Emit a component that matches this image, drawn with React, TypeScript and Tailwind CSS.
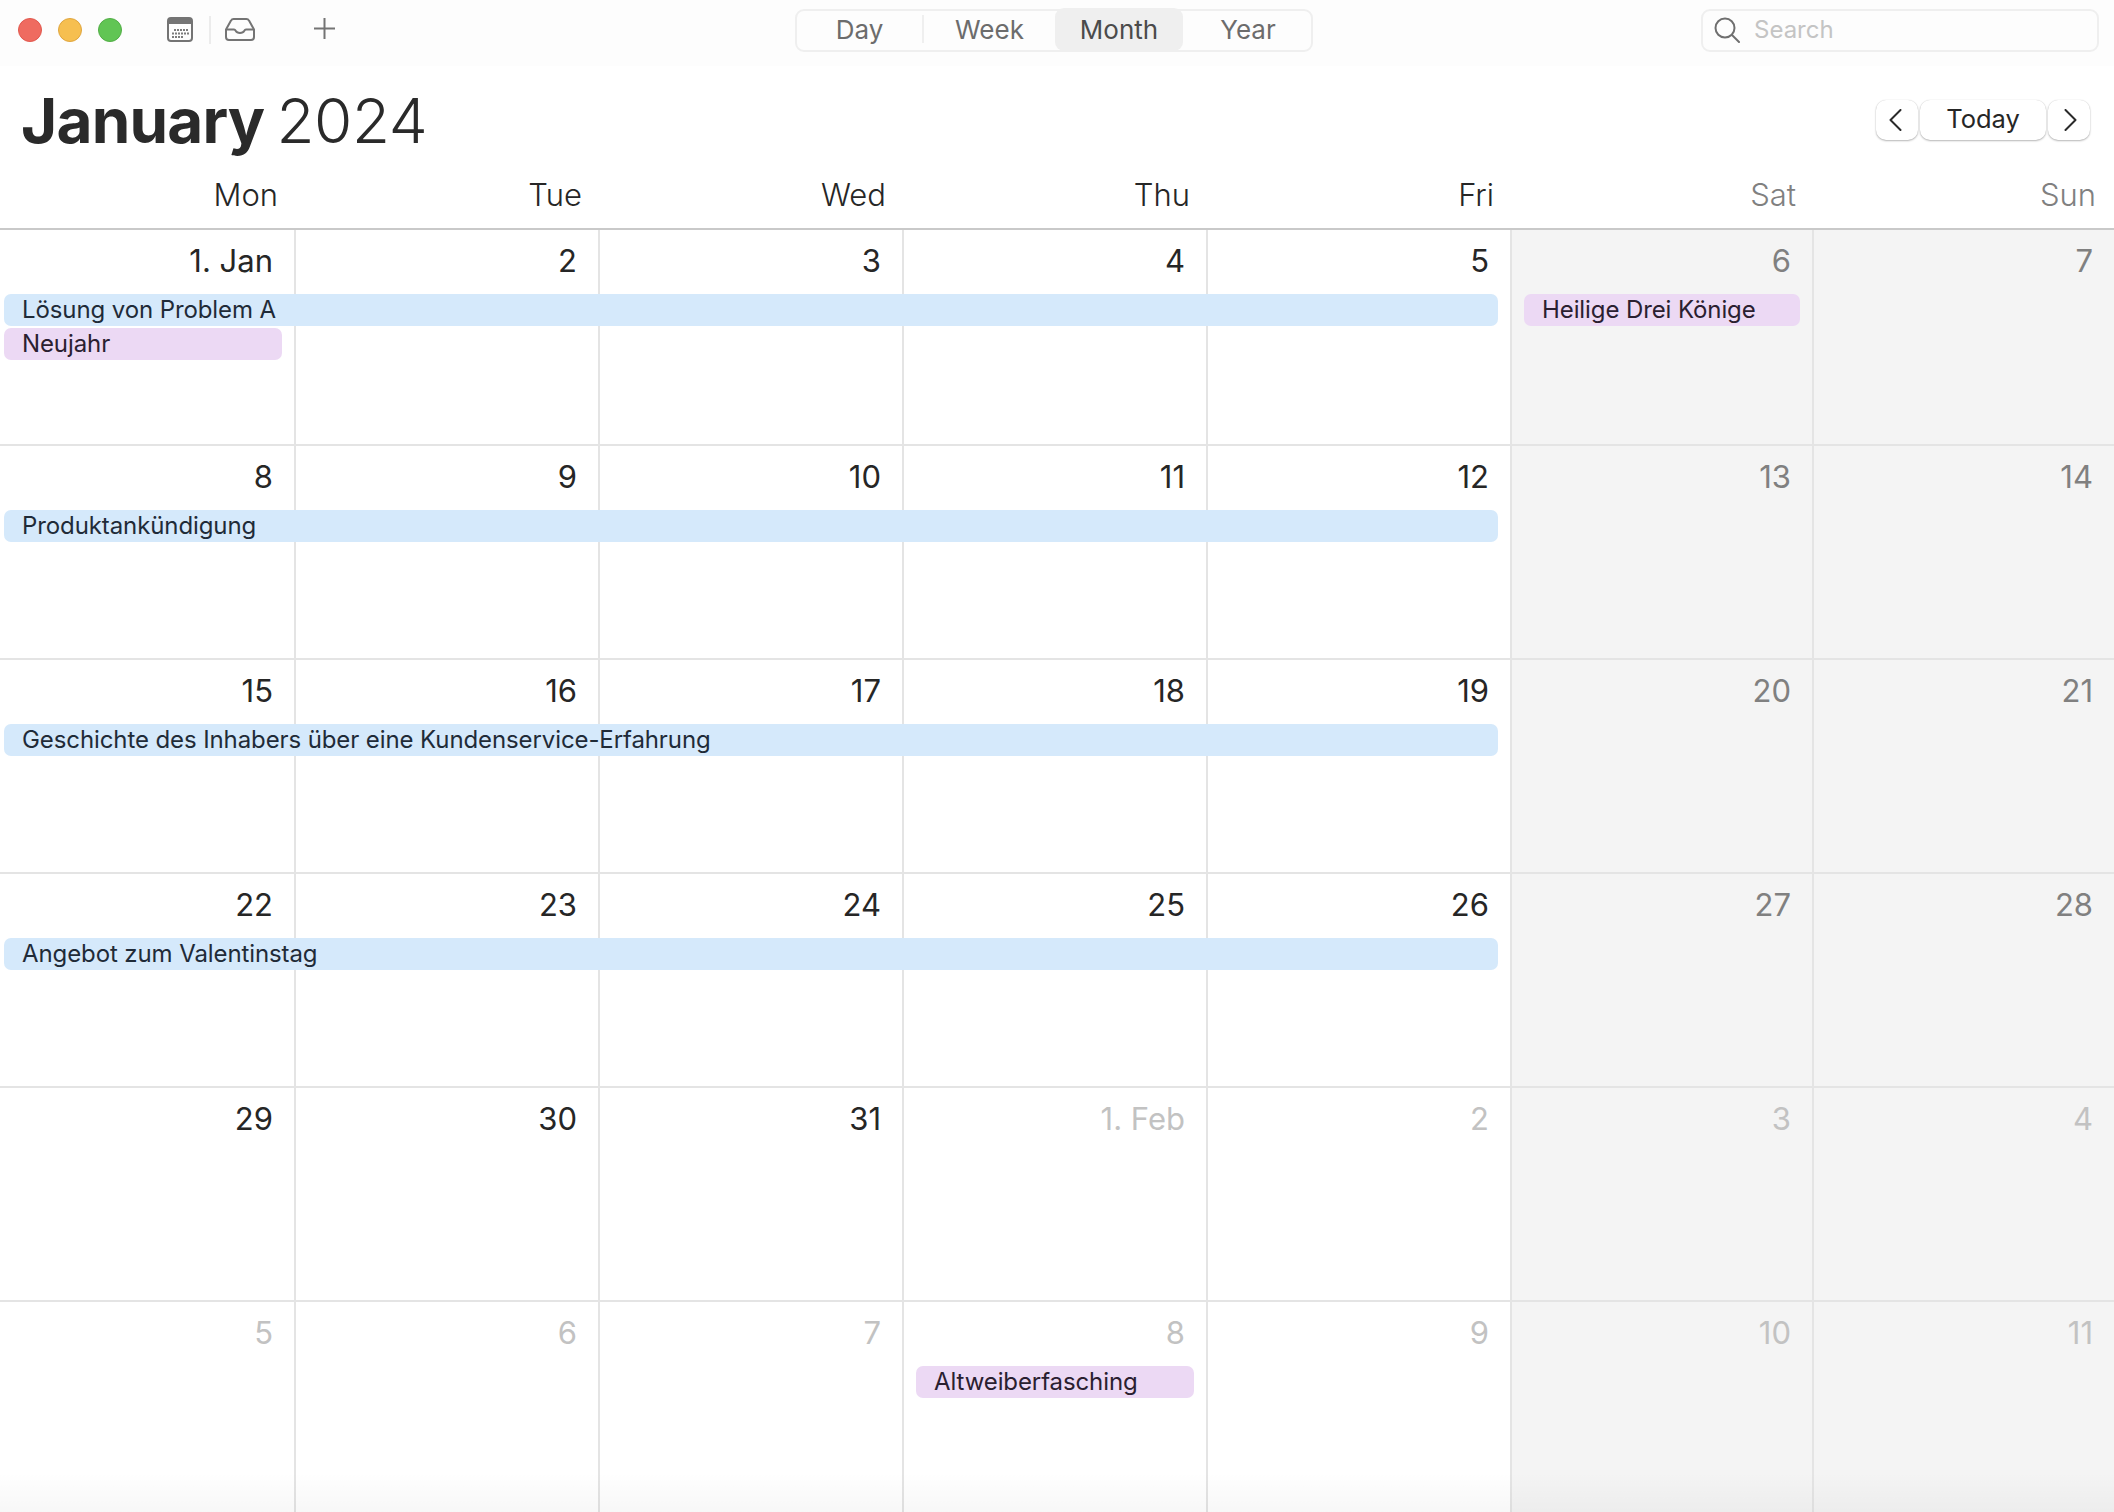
const dayNames = ["Mon", "Tue", "Wed", "Thu", "Fri", "Sat", "Sun"];

type Bar = { label: string; kind: "blue" | "purple"; row: "first" | "second"; col: "work" | "mon" | "sat" | "thu" };

type Week = { days: { label: string; muted?: boolean }[]; bars: Bar[] };

const weeks: Week[] = [
  {
    days: [{ label: "1. Jan" }, { label: "2" }, { label: "3" }, { label: "4" }, { label: "5" }, { label: "6" }, { label: "7" }],
    bars: [
      { label: "Lösung von Problem A", kind: "blue", row: "first", col: "work" },
      { label: "Neujahr", kind: "purple", row: "second", col: "mon" },
      { label: "Heilige Drei Könige", kind: "purple", row: "first", col: "sat" },
    ],
  },
  {
    days: [{ label: "8" }, { label: "9" }, { label: "10" }, { label: "11" }, { label: "12" }, { label: "13" }, { label: "14" }],
    bars: [{ label: "Produktankündigung", kind: "blue", row: "first", col: "work" }],
  },
  {
    days: [{ label: "15" }, { label: "16" }, { label: "17" }, { label: "18" }, { label: "19" }, { label: "20" }, { label: "21" }],
    bars: [{ label: "Geschichte des Inhabers über eine Kundenservice-Erfahrung", kind: "blue", row: "first", col: "work" }],
  },
  {
    days: [{ label: "22" }, { label: "23" }, { label: "24" }, { label: "25" }, { label: "26" }, { label: "27" }, { label: "28" }],
    bars: [{ label: "Angebot zum Valentinstag", kind: "blue", row: "first", col: "work" }],
  },
  {
    days: [
      { label: "29" },
      { label: "30" },
      { label: "31" },
      { label: "1. Feb", muted: true },
      { label: "2", muted: true },
      { label: "3", muted: true },
      { label: "4", muted: true },
    ],
    bars: [],
  },
  {
    days: ["5", "6", "7", "8", "9", "10", "11"].map((label) => ({ label, muted: true })),
    bars: [{ label: "Altweiberfasching", kind: "purple", row: "first", col: "thu" }],
  },
];

const cellCols = ["col-start-1", "col-start-2", "col-start-3", "col-start-4", "col-start-5", "col-start-6", "col-start-7"];

const barCols = {
  work: "col-start-1 col-end-6 ml-[4px] mr-[14px]",
  mon: "col-start-1 col-end-2 ml-[4px] mr-[14px]",
  sat: "col-start-6 col-end-7 ml-[12px] mr-[14px]",
  thu: "col-start-4 col-end-5 ml-[12px] mr-[14px]",
};

const gridCols = "grid-cols-[296px_304px_304px_304px_304px_302px_1fr]";

function dayColor(index: number, muted?: boolean) {
  if (muted) return "text-[#c2c2c2]";
  return index > 4 ? "text-[#808080]" : "text-[#262626]";
}

function WeekRow({ week, height }: { week: Week; height: string }) {
  return (
    <div className={`grid ${gridCols} grid-rows-[64px_32px_2px_32px_1fr] ${height} border-b-2 border-[#e4e4e4] last:border-b-0`}>
      {week.days.map((day, i) => (
        <div
          key={i}
          className={`${cellCols[i]} row-start-1 row-end-6 flex justify-end border-[#e4e4e4] pr-[21px] pt-[11px] ${i < 6 ? "border-r-2" : ""} ${i > 4 ? "bg-[#f4f4f4]" : "bg-white"}`}
        >
          <span className={`text-[31px] leading-[40px] ${dayColor(i, day.muted)}`}>{day.label}</span>
        </div>
      ))}
      {week.bars.map((bar) => (
        <div
          key={bar.label}
          className={`${barCols[bar.col]} ${bar.row === "first" ? "row-start-2" : "row-start-4"} z-10 flex items-center rounded-[7px] pl-[18px] text-[24px] tracking-[-0.1px] whitespace-nowrap ${
            bar.kind === "blue" ? "bg-[#d5e9fb] text-[#1f2b38]" : "bg-[#ecd9f4] text-[#2a2030]"
          }`}
        >
          {bar.label}
        </div>
      ))}
    </div>
  );
}

function CalendarIcon() {
  const dots: [number, number][] = [];
  for (let x = 7; x <= 19; x += 3) dots.push([x, 13]);
  for (let x = 5; x <= 20; x += 3) dots.push([x, 16.5]);
  for (let x = 5; x <= 14; x += 3) dots.push([x, 20]);
  return (
    <svg width="26" height="25" viewBox="0 0 26 25" fill="none">
      <rect x="1" y="1" width="24" height="23" rx="3" stroke="#747474" strokeWidth="2" />
      <path d="M1 4a3 3 0 0 1 3-3h18a3 3 0 0 1 3 3v3H1z" fill="#747474" />
      {dots.map(([x, y]) => (
        <rect key={`${x}-${y}`} x={x} y={y - 1} width="2" height="2" fill="#7c7c7c" />
      ))}
    </svg>
  );
}

function InboxIcon() {
  return (
    <svg width="30" height="23" viewBox="0 0 30 23" fill="none" stroke="#747474" strokeWidth="2" strokeLinejoin="round">
      <path d="M1 11.5 6 2.6A3 3 0 0 1 8.6 1h12.8A3 3 0 0 1 24 2.6l5 8.9V19a3 3 0 0 1-3 3H4a3 3 0 0 1-3-3z" />
      <path d="M1 11.5h8c1 0 1.3.5 1.7 1.3.8 1.5 2.3 2.2 4.3 2.2s3.5-.7 4.3-2.2c.4-.8.7-1.3 1.7-1.3h8" />
    </svg>
  );
}

function Toolbar() {
  return (
    <div className="grid h-[66px] grid-cols-[795px_518px_1fr] items-center bg-[#fdfdfd] pb-[6px]">
      <div className="flex items-center pl-[18px]">
        <span className="size-[24px] rounded-full border border-[#e2584e] bg-[#ef6b60]" />
        <span className="ml-[16px] size-[24px] rounded-full border border-[#e0a63f] bg-[#f6bf50]" />
        <span className="ml-[16px] size-[24px] rounded-full border border-[#52ae46] bg-[#61c554]" />
        <span className="ml-[45px] -mt-[2px] flex">
          <CalendarIcon />
        </span>
        <span className="ml-[16px] h-[28px] w-[2px] bg-[#ececec]" />
        <span className="ml-[14px] -mt-[2px] flex">
          <InboxIcon />
        </span>
        <svg className="ml-[59px] -mt-[4px]" width="21" height="21" viewBox="0 0 21 21" stroke="#747474" strokeWidth="2">
          <path d="M10.5 0v21M0 10.5h21" />
        </svg>
      </div>
      <div className="flex h-[43px] items-center rounded-[9px] border-2 border-[#efefef] pb-[2px] text-[26px] text-[#6c6c6c]">
        <span className="flex h-[28px] w-[127px] items-center justify-center border-r-2 border-[#efefef]">Day</span>
        <span className="w-[131px] text-center">Week</span>
        <span className="-my-[2px] flex h-[43px] w-[128px] items-center justify-center rounded-[9px] bg-[#efefef] text-[#4b4b4b]">Month</span>
        <span className="flex-1 pl-[2px] text-center">Year</span>
      </div>
      <div className="ml-[388px] flex h-[43px] w-[398px] items-center rounded-[9px] border-2 border-[#efefef] pl-[11px]">
        <svg width="26" height="26" viewBox="0 0 26 26" fill="none" stroke="#6f6f6f" strokeWidth="2" strokeLinecap="round">
          <circle cx="11" cy="11" r="9.5" />
          <path d="m18 18 7 7" />
        </svg>
        <span className="ml-[14px] text-[24px] text-[#c4c4c4]">Search</span>
      </div>
    </div>
  );
}

function NavButton({ className, children }: { className: string; children: React.ReactNode }) {
  return (
    <div className={`flex h-[40px] items-center justify-center rounded-[10px] bg-white shadow-[0_1px_2px_rgba(0,0,0,0.28),0_0_1px_rgba(0,0,0,0.18)] ${className}`}>
      {children}
    </div>
  );
}

function TitleRow() {
  return (
    <div className="flex h-[90px] items-start pl-[21px] pr-[24px]">
      <h1 className="mt-[19px] text-[62px] leading-[72px] font-light tracking-[-0.4px] text-[#2a2a2a] [word-spacing:-5px]">
        <span className="font-bold tracking-[-0.8px]">January</span> 2024
      </h1>
      <div className="mt-[34px] ml-auto flex gap-[2px]">
        <NavButton className="w-[42px] pr-[3px]">
          <svg width="13" height="22" viewBox="0 0 13 22" fill="none" stroke="#2a2a2a" strokeWidth="2" strokeLinecap="round" strokeLinejoin="round">
            <path d="M11.5 1 1.5 11l10 10" />
          </svg>
        </NavButton>
        <NavButton className="w-[126px] pb-[2px] text-[25.5px] text-[#262626]">Today</NavButton>
        <NavButton className="w-[42px] pl-[2px]">
          <svg width="13" height="22" viewBox="0 0 13 22" fill="none" stroke="#2a2a2a" strokeWidth="2" strokeLinecap="round" strokeLinejoin="round">
            <path d="m1.5 1 10 10-10 10" />
          </svg>
        </NavButton>
      </div>
    </div>
  );
}

export default function App() {
  return (
    <div className="relative h-[1512px] w-[2114px] overflow-hidden bg-white font-['Inter',sans-serif]">
      <Toolbar />
      <TitleRow />
      <div className={`grid ${gridCols} h-[74px] border-b-2 border-[#c9c9c9] pt-[19px]`}>
        {dayNames.map((name, i) => (
          <div key={name} className={`pr-[18px] text-right text-[31px] leading-[40px] font-light ${i > 4 ? "text-[#808080]" : "text-[#262626]"} ${i === 6 ? "pr-[16px]" : ""}`}>
            {name}
          </div>
        ))}
      </div>
      {weeks.map((week, i) => (
        <WeekRow key={i} week={week} height={i === 0 ? "h-[216px]" : "h-[214px]"} />
      ))}
      <div className="pointer-events-none absolute inset-x-0 bottom-0 z-20 h-[40px] bg-gradient-to-b from-transparent to-black/[0.03]" />
    </div>
  );
}
